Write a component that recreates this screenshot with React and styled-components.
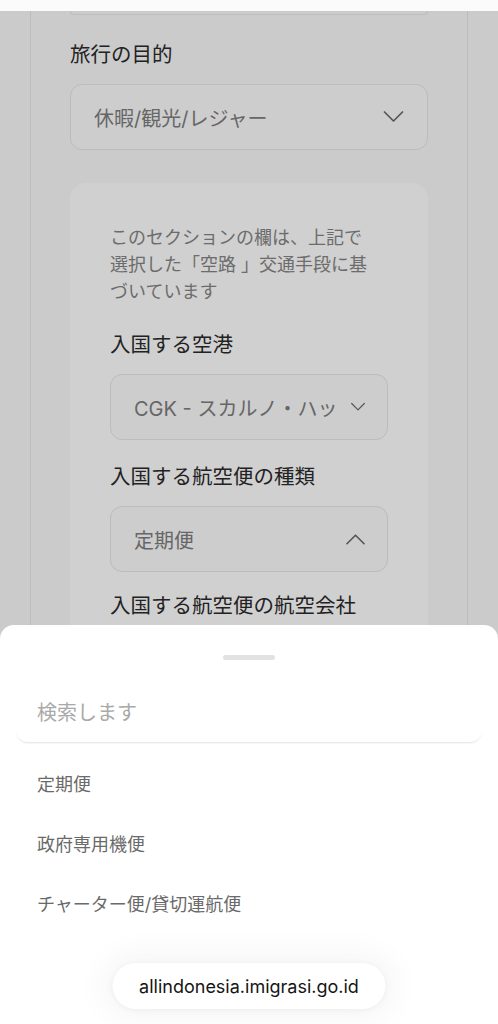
import React from 'react'
import styled, { createGlobalStyle } from 'styled-components'

const GlobalStyle = createGlobalStyle`
  html, body { margin: 0; padding: 0; background: #fff; }
  body { font-family: Inter, "Noto Sans CJK JP", sans-serif; }
  * { box-sizing: border-box; }
`

const Screen = styled.div`
  position: relative;
  width: 498px;
  height: 1024px;
  overflow: hidden;
  background: #fff;
`

const TopStrip = styled.div`
  height: 11px;
  background: #fbfbfb;
`

const Backdrop = styled.div`
  background: #cbcbcb;
  padding: 0 30px;
  height: 1013px;
`

const Card = styled.div`
  height: 100%;
  border-left: 1px solid #bcbcbc;
  border-right: 1px solid #bcbcbc;
  padding: 0 39px;
`

const PrevField = styled.div`
  height: 4px;
  border: 1px solid #bdbdbd;
  border-top: none;
  border-radius: 0 0 12px 12px;
`

const Label = styled.div`
  font-size: 20.5px;
  line-height: 28px;
  font-weight: 400;
  color: #222;
  margin: ${p => p.$top || 0}px 0 15px;
  white-space: nowrap;
`

const Select = styled.div`
  display: flex;
  align-items: center;
  height: 66px;
  padding: 0 ${p => p.$right || 23}px 0 23px;
  border: 1px solid #bcbcbc;
  border-radius: 12px;
  background: #cdcdcd;
`

const Value = styled.span`
  flex: 1;
  min-width: 0;
  overflow: hidden;
  white-space: nowrap;
  font-size: 20px;
  color: #666;
`

const Section = styled.div`
  margin-top: 33px;
  padding: 41px 40px 0;
  background: #d0d0d0;
  border-radius: 16px;
  height: 600px;
`

const Note = styled.p`
  margin: 0;
  max-width: 262px;
  font-size: 18px;
  line-height: 27px;
  color: #6c6c6c;
`

const Sheet = styled.div`
  position: absolute;
  left: 0;
  right: 0;
  top: 625px;
  bottom: 0;
  background: #fff;
  border-radius: 14px 14px 0 0;
  padding: 30px 16px 0;
`

const Handle = styled.div`
  width: 52px;
  height: 5px;
  margin: 0 auto 20px;
  border-radius: 3px;
  background: #e2e2e2;
`

const Search = styled.div`
  height: 62px;
  display: flex;
  align-items: center;
  padding-left: 21px;
  border-radius: 12px;
  background: #fff;
  box-shadow: 0 2px 2px -1px rgba(0, 0, 0, 0.12);
  font-size: 20px;
  color: #a9a9a9;
`

const List = styled.ul`
  list-style: none;
  margin: 11px 0 0;
  padding: 0;
`

const Item = styled.li`
  height: 60px;
  display: flex;
  align-items: center;
  padding-left: 21px;
  font-size: 18px;
  color: #6a6a6a;
`

const Fade = styled.div`
  position: absolute;
  left: 0;
  right: 0;
  bottom: 0;
  height: 90px;
  background: linear-gradient(to bottom, rgba(255,255,255,0.6), #fff 30%);
`

const UrlPill = styled.div`
  position: absolute;
  left: 50%;
  bottom: 15px;
  transform: translateX(-50%);
  width: 273px;
  height: 46px;
  border-radius: 23px;
  background: #fff;
  display: flex;
  align-items: center;
  justify-content: center;
  font-family: Inter, sans-serif;
  font-size: 18px;
  color: #151515;
  box-shadow: 0 0 30px 12px rgba(0, 0, 0, 0.035), 0 1px 6px rgba(0, 0, 0, 0.05);
`

const Chevron = ({ up, width = 20 }) => (
  <svg width={width} height="12" viewBox="0 0 20 12" fill="none">
    <path
      d={up ? 'M1 11 L10 2 L19 11' : 'M1 1 L10 10 L19 1'}
      stroke="#555"
      strokeWidth="1.7"
      strokeLinecap="round"
      strokeLinejoin="round"
    />
  </svg>
)

export default function App() {
  return (
    <Screen>
      <GlobalStyle />
      <TopStrip />
      <Backdrop>
        <Card>
          <PrevField />
          <Label $top={26}>旅行の目的</Label>
          <Select $right={23}>
            <Value>休暇/観光/レジャー</Value>
            <Chevron width={21} />
          </Select>
          <Section>
            <Note>このセクションの欄は、上記で選択した「空路 」交通手段に基づいています</Note>
            <Label $top={26}>入国する空港</Label>
            <Select $right={22}>
              <Value>CGK - スカルノ・ハッ</Value>
              <Chevron width={14} />
            </Select>
            <Label $top={23}>入国する航空便の種類</Label>
            <Select $right={22}>
              <Value>定期便</Value>
              <Chevron up width={19} />
            </Select>
            <Label $top={20}>入国する航空便の航空会社</Label>
          </Section>
        </Card>
      </Backdrop>
      <Sheet>
        <Handle />
        <Search>検索します</Search>
        <List>
          <Item>定期便</Item>
          <Item>政府専用機便</Item>
          <Item>チャーター便/貸切運航便</Item>
        </List>
      </Sheet>
      <Fade />
      <UrlPill>allindonesia.imigrasi.go.id</UrlPill>
    </Screen>
  )
}
